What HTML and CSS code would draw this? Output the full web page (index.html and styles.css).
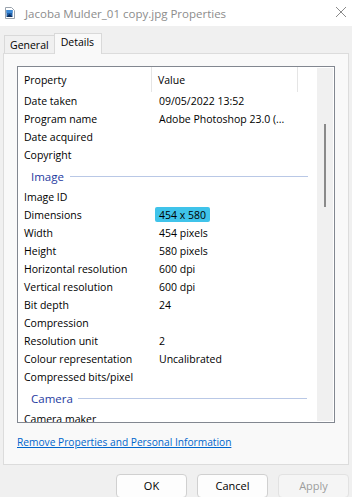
FILE: index.html
```html
<!DOCTYPE html>
<html>
<head>
<meta charset="utf-8">
<link rel="stylesheet" href="styles.css">
</head>
<body>
<div class="window">
  <div class="titlebar">
    <svg class="ticon" width="10" height="12" viewBox="0 0 10 12">
      <path d="M0.5 0.5h6l3 3v8h-9z" fill="#fff" stroke="#9aa3ad"/>
      <rect x="1.5" y="3" width="6" height="7" fill="#1f5fa8"/>
      <rect x="1.5" y="3" width="6" height="3" fill="#3b8ad8"/>
      <path d="M1.5 10l3-3 3 3z" fill="#0d2d5a"/>
    </svg>
    <span class="ttext">Jacoba Mulder_01 copy.jpg Properties</span>
    <svg class="close" width="12" height="12" viewBox="0 0 12 12">
      <path d="M1 1L11 11M11 1L1 11" stroke="#8a8a8a" stroke-width="1"/>
    </svg>
  </div>
  <div class="body">
    <div class="tabs">
      <div class="tab">General</div>
      <div class="tab active">Details</div>
    </div>
    <div class="panel">
      <div class="listbox">
        <div class="list">
          <div class="head">
            <div class="hcell c1">Property</div>
            <div class="hcell c2">Value</div>
            <div class="hcell c3"></div>
          </div>
          <div class="row"><span class="p">Date taken</span><span class="v">09/05/2022 13:52</span></div>
          <div class="row"><span class="p">Program name</span><span class="v">Adobe Photoshop 23.0 (...</span></div>
          <div class="row"><span class="p">Date acquired</span><span class="v"></span></div>
          <div class="row"><span class="p">Copyright</span><span class="v"></span></div>
          <div class="group"><span class="gname">Image</span><span class="gline"></span></div>
          <div class="row"><span class="p">Image ID</span><span class="v"></span></div>
          <div class="row"><span class="p">Dimensions</span><span class="v"><span class="hl">454 x 580</span></span></div>
          <div class="row"><span class="p">Width</span><span class="v">454 pixels</span></div>
          <div class="row"><span class="p">Height</span><span class="v">580 pixels</span></div>
          <div class="row"><span class="p">Horizontal resolution</span><span class="v">600 dpi</span></div>
          <div class="row"><span class="p">Vertical resolution</span><span class="v">600 dpi</span></div>
          <div class="row"><span class="p">Bit depth</span><span class="v">24</span></div>
          <div class="row"><span class="p">Compression</span><span class="v"></span></div>
          <div class="row"><span class="p">Resolution unit</span><span class="v">2</span></div>
          <div class="row"><span class="p">Colour representation</span><span class="v">Uncalibrated</span></div>
          <div class="row"><span class="p">Compressed bits/pixel</span><span class="v"></span></div>
          <div class="group"><span class="gname">Camera</span><span class="gline short"></span></div>
          <div class="row"><span class="p">Camera maker</span><span class="v"></span></div>
        </div>
        <div class="scrollbar"><div class="thumb"></div></div>
      </div>
      <a class="link" href="#">Remove Properties and Personal Information</a>
    </div>
    <div class="buttons">
      <div class="btn">OK</div>
      <div class="btn">Cancel</div>
      <div class="btn disabled">Apply</div>
    </div>
  </div>
</div>
</body>
</html>
```

FILE: styles.css
```css
* { box-sizing: border-box; }
html, body { margin: 0; padding: 0; }
body {
  width: 352px;
  height: 497px;
  overflow: hidden;
  background: #f0f0f0;
  font-family: "Open Sans", "Noto Sans", sans-serif;
  font-size: 10.5px;
  color: #000;
}
.window { width: 352px; height: 497px; display: flex; flex-direction: column; }
.titlebar {
  height: 26px;
  flex: none;
  background: #fff;
  display: flex;
  align-items: center;
  padding-left: 5px;
  position: relative;
}
.ttext {
  margin-left: 10px;
  color: #8c8c8c;
  font-size: 11.5px;
}
.close { position: absolute; right: 5px; top: 6px; }
.body { flex: 1; padding: 7px 3px 0 3px; display: flex; flex-direction: column; }
.tabs { display: flex; align-items: flex-end; height: 20px; padding-left: 1px; position: relative; z-index: 1; }
.tab {
  height: 18px;
  padding: 0 5px 0 5px;
  border: 1px solid #d9d9d9;
  border-bottom: none;
  background: #f0f0f0;
  line-height: 19px;
}
.tab.active {
  height: 21px;
  padding: 0 7px 0 6px;
  background: #f9f9f9;
  margin-bottom: -1px;
  line-height: 17px;
}
.tab:first-child { border-right: none; }
.panel {
  flex: none;
  height: 412px;
  background: #f9f9f9;
  border: 1px solid #dcdcdc;
  padding: 12px 0 0 13px;
}
.listbox {
  width: 318px;
  height: 357px;
  border: 1px solid #828790;
  background: #fff;
  display: flex;
  overflow: hidden;
}
.list { width: 298px; flex: none; height: 355px; overflow: hidden; }
.head { display: flex; height: 25px; }
.hcell { height: 25px; line-height: 27px; padding-left: 6px; border-right: 1px solid #e5e5e5; }
.c1 { width: 134px; }
.c2 { width: 146px; }
.c3 { width: 18px; border-right: none; }
.row { display: flex; height: 18px; line-height: 19px; white-space: nowrap; }
.p { width: 134px; padding-left: 6px; flex: none; }
.v { padding-left: 7px; }
.hl { background: #3fc3ea; padding: 1px 4px 0; margin-left: -4px; border-radius: 2px; }
.group { display: flex; align-items: center; height: 24px; padding-left: 13px; padding-top: 1px; }
.gname { color: #1e3aa0; font-size: 11.5px; }
.gline { flex: none; height: 1px; background: #b9c8e6; margin-left: 6px; width: 238px; }
.gline.short { width: 229px; margin-left: 5px; }
.scrollbar {
  width: 16px;
  margin: 1px 0 1px 1px;
  background: #f0f0f0;
  position: relative;
}
.thumb { position: absolute; left: 7px; top: 56px; width: 2px; height: 83px; background: #8a8a8a; }
.link {
  display: block;
  margin-top: 12px;
  margin-left: 0;
  color: #0066cc;
  text-decoration: underline;
  font-size: 10.2px;
}
.buttons { display: flex; justify-content: flex-end; gap: 10px; padding: 9px 0 0 0; }
.btn {
  width: 71px;
  height: 24px;
  background: #fdfdfd;
  border: 1px solid #d0d0d0;
  border-radius: 4px;
  text-align: center;
  line-height: 22px;
  font-size: 11px;
}
.btn.disabled { color: #9d9d9d; background: #f5f5f5; border-color: #e2e2e2; }
```
